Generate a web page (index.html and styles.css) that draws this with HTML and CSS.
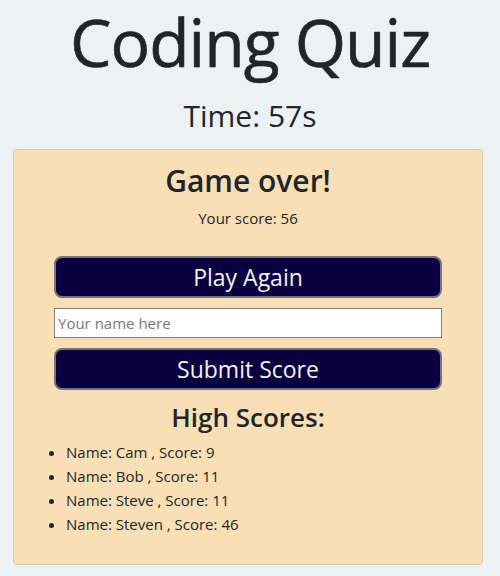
FILE: index.html
```html
<!DOCTYPE html>
<html>
<head>
<meta charset="utf-8">
<link rel="stylesheet" href="styles.css">
</head>
<body>
<header class="top">
  <h1 class="title">Coding Quiz</h1>
  <p class="timer">Time: 57s</p>
</header>
<main class="card">
  <h2 class="over">Game over!</h2>
  <p class="score">Your score: 56</p>
  <div class="actions">
    <button class="btn">Play Again</button>
    <input class="name" type="text" placeholder="Your name here">
    <button class="btn">Submit Score</button>
  </div>
  <h3 class="hs">High Scores:</h3>
  <ul class="list">
    <li>Name: Cam , Score: 9</li>
    <li>Name: Bob , Score: 11</li>
    <li>Name: Steve , Score: 11</li>
    <li>Name: Steven , Score: 46</li>
  </ul>
</main>
</body>
</html>
```
FILE: styles.css
```css
* { box-sizing: border-box; }
body {
  margin: 0;
  background: #ecf1f4;
  color: #212529;
  font-family: "Open Sans", "Noto Sans", sans-serif;
}
.top { text-align: center; }
.title {
  margin: 0;
  font-size: 66px;
  font-weight: 400;
  letter-spacing: -1px;
  line-height: 82px;
  -webkit-text-stroke: 0.6px #212529;
}
.timer {
  margin: 14px 0 0;
  font-size: 30px;
  line-height: 40px;
}
.card {
  margin: 13px 17px 0 13px;
  background: #f8dfb5;
  border: 1px solid #dcc6a0;
  border-radius: 4px;
  padding: 11px 12px 28px;
}
.over {
  margin: 0;
  text-align: center;
  font-size: 30px;
  font-weight: 600;
  line-height: 40px;
}
.score {
  margin: 6px 0 0;
  text-align: center;
  font-size: 15px;
  line-height: 22px;
}
.actions {
  margin: 27px 28px 0;
  display: flex;
  flex-direction: column;
  gap: 10px;
}
.btn {
  height: 42px;
  background: #0a0040;
  color: #eef4ff;
  border: 2px solid #74737c;
  border-radius: 8px;
  font-family: inherit;
  font-size: 23px;
}
.name {
  height: 30px;
  border: 1px solid #808080;
  background: #fff;
  font-family: inherit;
  font-size: 15px;
  padding: 0 3px;
}
.name::placeholder { color: #777; }
.hs {
  margin: 10px 0 0;
  text-align: center;
  font-size: 26px;
  font-weight: 600;
  line-height: 34px;
}
.list {
  margin: 6px 0 0;
  padding-left: 40px;
  font-size: 15px;
  line-height: 24px;
}
```
